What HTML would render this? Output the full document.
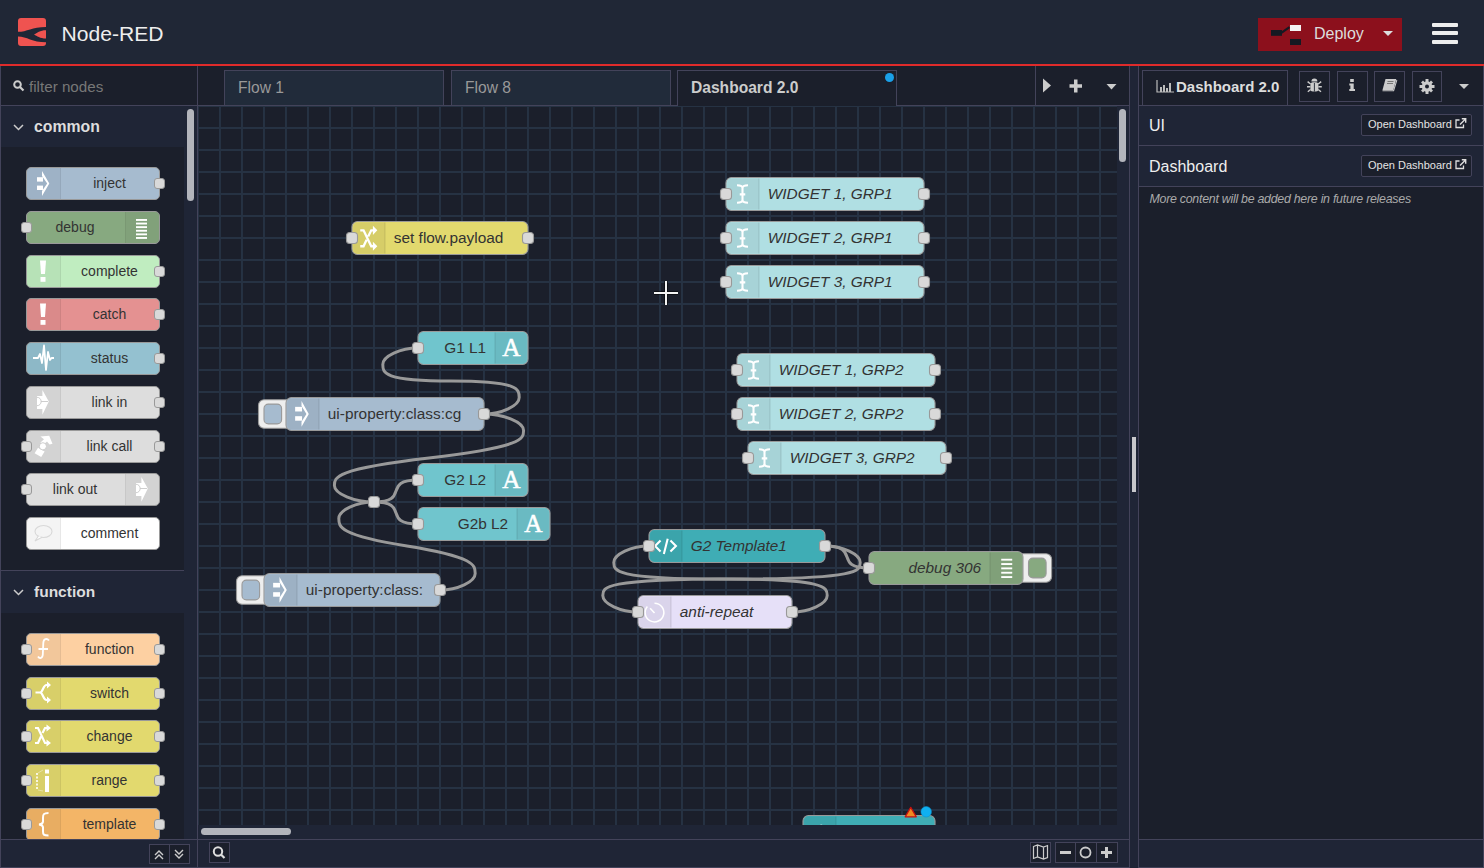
<!DOCTYPE html>
<html><head><meta charset="utf-8">
<style>
*{box-sizing:border-box;margin:0;padding:0}
html,body{width:1484px;height:868px;overflow:hidden;background:#202736;font-family:"Liberation Sans",sans-serif}
.abs{position:absolute}
.lbl{font-family:"Liberation Sans",sans-serif;font-size:14px;fill:#333}
.pnode{position:absolute;left:25px;width:134px;height:33px;border:1px solid #999;border-radius:5px}
.picon{position:absolute;top:0;bottom:0;width:34px;background:rgba(0,0,0,0.045);overflow:hidden}
.picon svg{position:absolute;left:0;top:0}
.plabel{position:absolute;top:0;bottom:0;line-height:31px;text-align:center;padding-right:2px;color:#333;font-size:14px;white-space:nowrap}
.pport{position:absolute;top:10px;width:11px;height:11px;background:#d9d9d9;border:1px solid #999;border-radius:3px}
</style></head><body>
<!-- header -->
<div class="abs" style="left:0;top:0;width:1484px;height:64px;background:#202736"></div>
<div class="abs" style="left:18px;top:18px;width:28px;height:28px;background:#ef5350;border-radius:3px;overflow:hidden">
<svg width="28" height="28" viewBox="0 0 28 28"><path d="M0 13.8 C9 13.8 14 8.9 28 8.9 V12.3 C22 12.3 19 15 16 16.6 C19 18.2 22 20.6 28 20.6 V24.2 C14 24.2 9 18.4 0 18.4Z" fill="#202736"/></svg></div>
<div class="abs" style="left:61.5px;top:21px;font-size:21.1px;color:#eee;line-height:25px">Node-RED</div>
<div class="abs" style="left:1258px;top:18px;width:144px;height:33px;background:#8c101c"></div>
<svg class="abs" style="left:1258px;top:18px" width="144" height="33">
<rect x="13" y="12" width="11" height="5.8" fill="#151922"/><path d="M23 15.2 L31.5 9.2" stroke="#151922" stroke-width="2.2"/><rect x="32" y="7" width="11" height="6" fill="#f4f4f4"/><rect x="32" y="21" width="11" height="6" fill="#151922"/>
<path d="M125 13h10l-5 5z" fill="#ddd"/></svg>
<div class="abs" style="left:1314px;top:25px;font-size:16px;color:#ddd;line-height:18px">Deploy</div>
<div class="abs" style="left:1432px;top:23px;width:26px;height:4px;background:#eee;border-radius:1px"></div>
<div class="abs" style="left:1432px;top:31px;width:26px;height:4px;background:#eee;border-radius:1px"></div>
<div class="abs" style="left:1432px;top:40px;width:26px;height:4px;background:#eee;border-radius:1px"></div>
<div class="abs" style="left:0;top:64px;width:1484px;height:2px;background:#e02b2b"></div><div class="abs" style="left:0;top:66px;width:1484px;height:1px;background:#2c3244"></div>

<!-- outer borders -->
<div class="abs" style="left:0;top:66px;width:1px;height:802px;background:#43435a"></div>
<div class="abs" style="left:1483px;top:66px;width:1px;height:802px;background:#43435a"></div>
<div class="abs" style="left:0;top:867px;width:1484px;height:1px;background:#43435a"></div>

<!-- palette -->
<div class="abs" style="left:1px;top:66px;width:196px;height:773px;background:#1f2536;overflow:hidden">
  <div class="abs" style="left:0;top:0;width:196px;height:39px;background:#1b1f2b"></div>
  <svg class="abs" style="left:12px;top:80px;top:14px" width="12" height="12"><circle cx="4.5" cy="4.5" r="3.3" stroke="#ccc" stroke-width="2" fill="none"/><path d="M7 7l3.5 3.5" stroke="#ccc" stroke-width="2.2"/></svg>
  <div class="abs" style="left:28px;top:12px;font-size:15.2px;color:#777;line-height:18px">filter nodes</div>
  <div class="abs" style="left:0;top:39px;width:196px;height:1px;background:#43435a"></div>
  <svg class="abs" style="left:12px;top:58px" width="11" height="7"><path d="M1 1l4.5 4.5L10 1" stroke="#ccc" stroke-width="1.5" fill="none"/></svg>
  <div class="abs" style="left:33px;top:51.5px;font-size:15.8px;font-weight:bold;color:#ddd;line-height:18px">common</div>
  <div class="abs" style="left:0;top:81px;width:183px;height:423px;background:#1b1f2b"><div class="pnode" style="top:20px;background:#a6bbcf"><div class="picon" style="left:0;border-right:1px solid rgba(0,0,0,0.05)"><svg width="34" height="33" style="position:absolute;left:-1px;top:-1px"><rect x="11" y="10.2" width="6" height="4.4" fill="#fff"/><rect x="11" y="18.6" width="6" height="4.4" fill="#fff"/><path d="M16 4 L23.3 16.5 L16 29 V24 L21.2 16.5 L16 9z" fill="#fff"/></svg></div><div class="plabel" style="left:35px;right:0">inject</div><div class="pport" style="right:-6px"></div></div><div class="pnode" style="top:64px;background:#87a980"><div class="plabel" style="left:0;right:34px">debug</div><div class="picon" style="right:0;border-left:1px solid rgba(0,0,0,0.05)"><svg width="34" height="33" style="position:absolute;left:-1px;top:-1px"><rect x="11" y="8.0" width="11" height="1.9" fill="#fff"/><rect x="11" y="11.6" width="11" height="1.9" fill="#fff"/><rect x="11" y="15.2" width="11" height="1.9" fill="#fff"/><rect x="11" y="18.8" width="11" height="1.9" fill="#fff"/><rect x="11" y="22.4" width="11" height="1.9" fill="#fff"/><rect x="11" y="26.0" width="11" height="1.9" fill="#fff"/></svg></div><div class="pport" style="left:-6px"></div></div><div class="pnode" style="top:108px;background:#c0edc0"><div class="picon" style="left:0;border-right:1px solid rgba(0,0,0,0.05)"><svg width="34" height="33" style="position:absolute;left:-1px;top:-1px"><path d="M14 5.5h6l-1 13.5h-4z" fill="#fff"/><rect x="14.5" y="22" width="5" height="4.8" fill="#fff"/></svg></div><div class="plabel" style="left:35px;right:0">complete</div><div class="pport" style="right:-6px"></div></div><div class="pnode" style="top:151px;background:#e49191"><div class="picon" style="left:0;border-right:1px solid rgba(0,0,0,0.05)"><svg width="34" height="33" style="position:absolute;left:-1px;top:-1px"><path d="M14 5.5h6l-1 13.5h-4z" fill="#fff"/><rect x="14.5" y="22" width="5" height="4.8" fill="#fff"/></svg></div><div class="plabel" style="left:35px;right:0">catch</div><div class="pport" style="right:-6px"></div></div><div class="pnode" style="top:195px;background:#94c1d0"><div class="picon" style="left:0;border-right:1px solid rgba(0,0,0,0.05)"><svg width="34" height="33" style="position:absolute;left:-1px;top:-1px"><path d="M7 16H12L14 12L16 21L18 3.5L20 28L22 10L24 18L25.5 16H28" stroke="#fff" stroke-width="1.8" fill="none" stroke-linejoin="round"/></svg></div><div class="plabel" style="left:35px;right:0">status</div><div class="pport" style="right:-6px"></div></div><div class="pnode" style="top:239px;background:#dddddd"><div class="picon" style="left:0;border-right:1px solid rgba(0,0,0,0.05)"><svg width="34" height="33" style="position:absolute;left:-1px;top:-1px"><path d="M16.4 3.9 L22.8 15.5 L16.4 28.8 V23 H11 V10 H16.4z" fill="#fff"/><path d="M11 11.3 A4.2 4.2 0 0 1 11 19.7 M14.8 15.5 H22" stroke="#c8c8c8" stroke-width="0.9" fill="none"/></svg></div><div class="plabel" style="left:35px;right:0">link in</div><div class="pport" style="right:-6px"></div></div><div class="pnode" style="top:283px;background:#dddddd"><div class="picon" style="left:0;border-right:1px solid rgba(0,0,0,0.05)"><svg width="34" height="33" style="position:absolute;left:-1px;top:-1px"><g fill="#fff"><path d="M8.6 23.2 L12 17.8 L18.6 21.6 L15.2 27z"/><path d="M14.4 6.5 L23.2 5.8 L26.5 13.8 L23.5 14.6 L21 11.5 L16.5 15.5 L14.5 12.5 L18 9.3z"/></g><circle cx="16.9" cy="16.3" r="3.6" fill="#fff" stroke="#c8c8c8" stroke-width="0.9"/></svg></div><div class="plabel" style="left:35px;right:0">link call</div><div class="pport" style="left:-6px"></div><div class="pport" style="right:-6px"></div></div><div class="pnode" style="top:326px;background:#dddddd"><div class="plabel" style="left:0;right:34px">link out</div><div class="picon" style="right:0;border-left:1px solid rgba(0,0,0,0.05)"><svg width="34" height="33" style="position:absolute;left:-1px;top:-1px"><path d="M16.4 3.9 L22.8 15.5 L16.4 28.8 V23 H11 V10 H16.4z" fill="#fff"/><path d="M11 11.3 A4.2 4.2 0 0 1 11 19.7 M14.8 15.5 H22" stroke="#c8c8c8" stroke-width="0.9" fill="none"/></svg></div><div class="pport" style="left:-6px"></div></div><div class="pnode" style="top:370px;background:#ffffff"><div class="picon" style="left:0;border-right:1px solid rgba(0,0,0,0.05)"><svg width="34" height="33" style="position:absolute;left:-1px;top:-1px"><ellipse cx="17.5" cy="14.5" rx="8.5" ry="6" stroke="#d8d8d8" stroke-width="1.1" fill="none"/><path d="M12.5 19 L9 24 L16 20.3" stroke="#d8d8d8" stroke-width="1.1" fill="#fff"/></svg></div><div class="plabel" style="left:35px;right:0">comment</div></div></div>
  <div class="abs" style="left:0;top:504px;width:183px;height:1px;background:#43435a"></div>
  <svg class="abs" style="left:12px;top:523px" width="11" height="7"><path d="M1 1l4.5 4.5L10 1" stroke="#ccc" stroke-width="1.5" fill="none"/></svg>
  <div class="abs" style="left:33px;top:517px;font-size:15.5px;font-weight:bold;color:#ddd;line-height:18px">function</div>
  <div class="abs" style="left:0;top:547px;width:183px;height:300px;background:#1b1f2b"><div class="pnode" style="top:20px;background:#fdd0a2"><div class="picon" style="left:0;border-right:1px solid rgba(0,0,0,0.05)"><svg width="34" height="33" style="position:absolute;left:-1px;top:-1px"><path d="M23 7.5 C21 5 17.5 5.5 17.3 10 L16.8 21.5 C16.6 25.5 13.5 26 12 23.5 M12.5 16 H22" stroke="#fff" stroke-width="1.8" fill="none"/></svg></div><div class="plabel" style="left:35px;right:0">function</div><div class="pport" style="left:-6px"></div><div class="pport" style="right:-6px"></div></div><div class="pnode" style="top:64px;background:#e2d96e"><div class="picon" style="left:0;border-right:1px solid rgba(0,0,0,0.05)"><svg width="34" height="33" style="position:absolute;left:-1px;top:-1px"><g stroke="#fff" stroke-width="2.2" fill="none"><path d="M9.5 15.5 H14 C17 15.5 17 8 20.5 8 H22 M14 15.5 C17 15.5 17 23 20.5 23 H22"/></g><path d="M21 4.5 L25 8 L21 11.5z M21 19.5 L25 23 L21 26.5z" fill="#fff"/></svg></div><div class="plabel" style="left:35px;right:0">switch</div><div class="pport" style="left:-6px"></div><div class="pport" style="right:-6px"></div></div><div class="pnode" style="top:107px;background:#e2d96e"><div class="picon" style="left:0;border-right:1px solid rgba(0,0,0,0.05)"><svg width="34" height="33" style="position:absolute;left:-1px;top:-1px"><g stroke="#fff" stroke-width="2.2" fill="none"><path d="M9 8 H12 L19 23 H21 M9 23 H12 L15 16.5 M16.5 13 L19 8 H21"/></g><path d="M20.5 4.5 L25 8 L20.5 11.5z M20.5 19.5 L25 23 L20.5 26.5z" fill="#fff"/></svg></div><div class="plabel" style="left:35px;right:0">change</div><div class="pport" style="left:-6px"></div><div class="pport" style="right:-6px"></div></div><div class="pnode" style="top:151px;background:#e2d96e"><div class="picon" style="left:0;border-right:1px solid rgba(0,0,0,0.05)"><svg width="34" height="33" style="position:absolute;left:-1px;top:-1px"><rect x="19" y="5.5" width="4" height="4" fill="#fff"/><rect x="19" y="12" width="4" height="16" fill="#fff"/><path d="M11 9v17" stroke="#fff" stroke-width="2" stroke-dasharray="2 1.5" opacity="0.8"/><path d="M12 9 L17 6 M12 26 L17 27" stroke="#fff" stroke-width="0.8" opacity="0.5"/></svg></div><div class="plabel" style="left:35px;right:0">range</div><div class="pport" style="left:-6px"></div><div class="pport" style="right:-6px"></div></div><div class="pnode" style="top:195px;background:#f3b567"><div class="picon" style="left:0;border-right:1px solid rgba(0,0,0,0.05)"><svg width="34" height="33" style="position:absolute;left:-1px;top:-1px"><path d="M22.5 5 C17.5 5 17 6.5 17 10 V13.5 C17 15.5 15.5 16.2 13 16.5 C15.5 16.8 17 17.5 17 19.5 V23.5 C17 26.5 17.5 27.5 22.5 27.5" stroke="#fff" stroke-width="2" fill="none"/></svg></div><div class="plabel" style="left:35px;right:0">template</div><div class="pport" style="left:-6px"></div><div class="pport" style="right:-6px"></div></div></div>
  <div class="abs" style="left:186px;top:43px;width:7px;height:92px;background:#b3b5bc;border-radius:4px"></div>
</div>
<div class="abs" style="left:197px;top:66px;width:1px;height:802px;background:#43435a"></div>
<div class="abs" style="left:1px;top:839px;width:196px;height:1px;background:#43435a"></div>
<div class="abs" style="left:1px;top:840px;width:196px;height:27px;background:#1f2536"></div>
<div class="abs" style="left:149px;top:844px;width:41px;height:20px;border:1px solid #43435a;background:#1b1f2b"></div>
<div class="abs" style="left:169px;top:844px;width:1px;height:20px;background:#43435a"></div>
<svg class="abs" style="left:149px;top:844px" width="41" height="20"><path d="M6 11l4-4 4 4M6 15l4-4 4 4M26 6l4 4 4-4M26 10l4 4 4-4" stroke="#ccc" stroke-width="1.4" fill="none"/></svg>

<!-- canvas -->
<div class="abs" style="left:198px;top:66px;width:931px;height:39px;background:#1b1f2b">
  <div class="abs" style="left:26px;top:4px;width:220px;height:35px;background:#212b3a;border:1px solid #43435a;border-bottom:none"></div>
  <div class="abs" style="left:40px;top:13px;font-size:15.6px;color:#999;line-height:17px">Flow 1</div>
  <div class="abs" style="left:253px;top:4px;width:220px;height:35px;background:#212b3a;border:1px solid #43435a;border-bottom:none"></div>
  <div class="abs" style="left:267px;top:13px;font-size:15.6px;color:#999;line-height:17px">Flow 8</div>
  <div class="abs" style="left:479px;top:4px;width:220px;height:36px;background:#1b1f2b;border:1px solid #43435a;border-bottom:none;z-index:2"></div>
  <div class="abs" style="left:493px;top:13px;font-size:15.6px;font-weight:bold;color:#ccc;line-height:17px;z-index:3">Dashboard 2.0</div>
  <div class="abs" style="left:687px;top:7px;width:9px;height:9px;border-radius:50%;background:#1aa0e8;z-index:3"></div>
  <div class="abs" style="left:837px;top:0;width:1px;height:39px;background:#43435a"></div>
  <svg class="abs" style="left:838px;top:0" width="93" height="39"><path d="M7 12.5v14l8-7z" fill="#ccc"/><path d="M33.5 20h12.5M39.75 13.5v13" stroke="#ccc" stroke-width="3.5"/><path d="M70.5 18h10l-5 5.5z" fill="#ccc"/></svg>
</div>
<div class="abs" style="left:198px;top:105px;width:931px;height:1px;background:#43435a"></div>
<div class="abs" style="left:1129px;top:66px;width:1px;height:802px;background:#43435a"></div>
<div class="abs" style="left:198px;top:106px;width:931px;height:733px;background:#1f2536;overflow:hidden">
  <div class="abs" style="left:0;top:0;width:919px;height:719px;background:#1b1f2b;overflow:hidden"><svg width="919" height="719" style="position:absolute;left:0;top:0">
<g transform="scale(1.1)">
<g stroke="#263243" stroke-width="1.8181" fill="none"><path d="M0 0V700" /><path d="M20 0V700" /><path d="M40 0V700" /><path d="M60 0V700" /><path d="M80 0V700" /><path d="M100 0V700" /><path d="M120 0V700" /><path d="M140 0V700" /><path d="M160 0V700" /><path d="M180 0V700" /><path d="M200 0V700" /><path d="M220 0V700" /><path d="M240 0V700" /><path d="M260 0V700" /><path d="M280 0V700" /><path d="M300 0V700" /><path d="M320 0V700" /><path d="M340 0V700" /><path d="M360 0V700" /><path d="M380 0V700" /><path d="M400 0V700" /><path d="M420 0V700" /><path d="M440 0V700" /><path d="M460 0V700" /><path d="M480 0V700" /><path d="M500 0V700" /><path d="M520 0V700" /><path d="M540 0V700" /><path d="M560 0V700" /><path d="M580 0V700" /><path d="M600 0V700" /><path d="M620 0V700" /><path d="M640 0V700" /><path d="M660 0V700" /><path d="M680 0V700" /><path d="M700 0V700" /><path d="M720 0V700" /><path d="M740 0V700" /><path d="M760 0V700" /><path d="M780 0V700" /><path d="M800 0V700" /><path d="M820 0V700" /><path d="M840 0V700" /><path d="M860 0V700" /><path d="M0 0H900" /><path d="M0 20H900" /><path d="M0 40H900" /><path d="M0 60H900" /><path d="M0 80H900" /><path d="M0 100H900" /><path d="M0 120H900" /><path d="M0 140H900" /><path d="M0 160H900" /><path d="M0 180H900" /><path d="M0 200H900" /><path d="M0 220H900" /><path d="M0 240H900" /><path d="M0 260H900" /><path d="M0 280H900" /><path d="M0 300H900" /><path d="M0 320H900" /><path d="M0 340H900" /><path d="M0 360H900" /><path d="M0 380H900" /><path d="M0 400H900" /><path d="M0 420H900" /><path d="M0 440H900" /><path d="M0 460H900" /><path d="M0 480H900" /><path d="M0 500H900" /><path d="M0 520H900" /><path d="M0 540H900" /><path d="M0 560H900" /><path d="M0 580H900" /><path d="M0 600H900" /><path d="M0 620H900" /><path d="M0 640H900" /><path d="M0 660H900" /></g>
<g stroke="#999" stroke-width="2.7" fill="none"><path d="M 260 280 C 276 280 292 272.5 292 265 S 292 250 230 250 S 168 242.5 168 235 S 184 220 200 220"/><path d="M 260 280 C 278 280 296 287.5 296 295 S 296 310 210 320 S 124 337.5 124 345 S 142 360 160 360"/><path d="M 220 440 C 236 440 252 432.5 252 425 S 252 410 190 400 S 128 382.5 128 375 S 144 360 160 360"/><path d="M 160 360 C 193.54 360 166.46 340 200 340"/><path d="M 160 360 C 193.54 360 166.46 380 200 380"/><path d="M 570 400 C 603.54 400 576.46 420 610 420"/><path d="M 570 400 C 586 400 602 407.5 602 415 S 602 430 485 430 S 368 437.5 368 445 S 384 460 400 460"/><path d="M 540 460 C 556 460 572 452.5 572 445 S 572 430 475 430 S 378 422.5 378 415 S 394 400 410 400"/></g>
<rect x="155" y="355" width="10" height="10" rx="3" fill="#d9d9d9" stroke="#999"/>
<g transform="translate(140,105)"><rect x="0" y="0" width="160" height="30" rx="5" fill="#e2d96e" stroke="#999"/><path d="M30 1h-25a4 4 0 0 0-4 4v20a4 4 0 0 0 4 4h25z" fill="#000" fill-opacity="0.05"/><path d="M30 1v28" stroke="#000" stroke-opacity="0.1"/><g stroke="#fff" stroke-width="2.1" fill="none"><path d="M7.5 8 H10.5 L17.5 22.5 H19.5 M7.5 22.5 H10.5 L13.3 16.6 M14.7 13.7 L17.5 8 H19.5"/></g><path d="M19 3.8 L23 8 L19 12.2z M19 18.3 L23 22.5 L19 26.7z" fill="#fff"/><text x="38" y="15" dy=".35em" style="" class="lbl">set flow.payload</text><rect x="-5" y="10" width="10" height="10" rx="3" fill="#d9d9d9" stroke="#999"/><rect x="155" y="10" width="10" height="10" rx="3" fill="#d9d9d9" stroke="#999"/></g><g transform="translate(200,205)"><rect x="0" y="0" width="100" height="30" rx="5" fill="#70c5cd" stroke="#999"/><path d="M70 1h25a4 4 0 0 1 4 4v20a4 4 0 0 1-4 4h-25z" fill="#000" fill-opacity="0.05"/><path d="M70 1v28" stroke="#000" stroke-opacity="0.1"/><g transform="translate(70,0)"><text x="15" y="22.3" font-family="Liberation Serif" font-size="23" fill="#fff" stroke="#fff" stroke-width="0.45" text-anchor="middle">A</text></g><text x="62" y="15" dy=".35em" text-anchor="end" style="" class="lbl">G1 L1</text><rect x="-5" y="10" width="10" height="10" rx="3" fill="#d9d9d9" stroke="#999"/></g><g transform="translate(80,265)"><rect x="-25" y="2" width="32" height="26" rx="5" fill="#eee" stroke="#999"/><rect x="-20" y="6" width="16" height="18" rx="4" fill="#a6bbcf" stroke="#999"/><rect x="0" y="0" width="180" height="30" rx="5" fill="#a6bbcf" stroke="#999"/><path d="M30 1h-25a4 4 0 0 0-4 4v20a4 4 0 0 0 4 4h25z" fill="#000" fill-opacity="0.05"/><path d="M30 1v28" stroke="#000" stroke-opacity="0.1"/><rect x="8.3" y="8.5" width="6.3" height="4.2" fill="#fff"/><rect x="8.3" y="17" width="6.3" height="4.1" fill="#fff"/><path d="M14.1 3.2 L20.7 14.9 L14.1 26.5 V22 L18.6 14.9 L14.1 7.7z" fill="#fff"/><text x="38" y="15" dy=".35em" style="" class="lbl">ui-property:class:cg</text><rect x="175" y="10" width="10" height="10" rx="3" fill="#d9d9d9" stroke="#999"/></g><g transform="translate(200,325)"><rect x="0" y="0" width="100" height="30" rx="5" fill="#70c5cd" stroke="#999"/><path d="M70 1h25a4 4 0 0 1 4 4v20a4 4 0 0 1-4 4h-25z" fill="#000" fill-opacity="0.05"/><path d="M70 1v28" stroke="#000" stroke-opacity="0.1"/><g transform="translate(70,0)"><text x="15" y="22.3" font-family="Liberation Serif" font-size="23" fill="#fff" stroke="#fff" stroke-width="0.45" text-anchor="middle">A</text></g><text x="62" y="15" dy=".35em" text-anchor="end" style="" class="lbl">G2 L2</text><rect x="-5" y="10" width="10" height="10" rx="3" fill="#d9d9d9" stroke="#999"/></g><g transform="translate(200,365)"><rect x="0" y="0" width="120" height="30" rx="5" fill="#70c5cd" stroke="#999"/><path d="M90 1h25a4 4 0 0 1 4 4v20a4 4 0 0 1-4 4h-25z" fill="#000" fill-opacity="0.05"/><path d="M90 1v28" stroke="#000" stroke-opacity="0.1"/><g transform="translate(90,0)"><text x="15" y="22.3" font-family="Liberation Serif" font-size="23" fill="#fff" stroke="#fff" stroke-width="0.45" text-anchor="middle">A</text></g><text x="82" y="15" dy=".35em" text-anchor="end" style="" class="lbl">G2b L2</text><rect x="-5" y="10" width="10" height="10" rx="3" fill="#d9d9d9" stroke="#999"/></g><g transform="translate(60,425)"><rect x="-25" y="2" width="32" height="26" rx="5" fill="#eee" stroke="#999"/><rect x="-20" y="6" width="16" height="18" rx="4" fill="#a6bbcf" stroke="#999"/><rect x="0" y="0" width="160" height="30" rx="5" fill="#a6bbcf" stroke="#999"/><path d="M30 1h-25a4 4 0 0 0-4 4v20a4 4 0 0 0 4 4h25z" fill="#000" fill-opacity="0.05"/><path d="M30 1v28" stroke="#000" stroke-opacity="0.1"/><rect x="8.3" y="8.5" width="6.3" height="4.2" fill="#fff"/><rect x="8.3" y="17" width="6.3" height="4.1" fill="#fff"/><path d="M14.1 3.2 L20.7 14.9 L14.1 26.5 V22 L18.6 14.9 L14.1 7.7z" fill="#fff"/><text x="38" y="15" dy=".35em" style="" class="lbl">ui-property:class:</text><rect x="155" y="10" width="10" height="10" rx="3" fill="#d9d9d9" stroke="#999"/></g><g transform="translate(480,65)"><rect x="0" y="0" width="180" height="30" rx="5" fill="#b0dfe3" stroke="#999"/><path d="M30 1h-25a4 4 0 0 0-4 4v20a4 4 0 0 0 4 4h25z" fill="#000" fill-opacity="0.05"/><path d="M30 1v28" stroke="#000" stroke-opacity="0.1"/><g fill="none" stroke="#fff" stroke-width="1.9"><path d="M10 7c3 0 5 .5 5 2.5v11c0 2 2 2.5 5 2.5M20 7c-3 0-5 .5-5 2.5v11c0 2-2 2.5-5 2.5M12.5 15.3h5"/></g><text x="38" y="15" dy=".35em" style="font-style:italic;" class="lbl">WIDGET 1, GRP1</text><rect x="-5" y="10" width="10" height="10" rx="3" fill="#d9d9d9" stroke="#999"/><rect x="175" y="10" width="10" height="10" rx="3" fill="#d9d9d9" stroke="#999"/></g><g transform="translate(480,105)"><rect x="0" y="0" width="180" height="30" rx="5" fill="#b0dfe3" stroke="#999"/><path d="M30 1h-25a4 4 0 0 0-4 4v20a4 4 0 0 0 4 4h25z" fill="#000" fill-opacity="0.05"/><path d="M30 1v28" stroke="#000" stroke-opacity="0.1"/><g fill="none" stroke="#fff" stroke-width="1.9"><path d="M10 7c3 0 5 .5 5 2.5v11c0 2 2 2.5 5 2.5M20 7c-3 0-5 .5-5 2.5v11c0 2-2 2.5-5 2.5M12.5 15.3h5"/></g><text x="38" y="15" dy=".35em" style="font-style:italic;" class="lbl">WIDGET 2, GRP1</text><rect x="-5" y="10" width="10" height="10" rx="3" fill="#d9d9d9" stroke="#999"/><rect x="175" y="10" width="10" height="10" rx="3" fill="#d9d9d9" stroke="#999"/></g><g transform="translate(480,145)"><rect x="0" y="0" width="180" height="30" rx="5" fill="#b0dfe3" stroke="#999"/><path d="M30 1h-25a4 4 0 0 0-4 4v20a4 4 0 0 0 4 4h25z" fill="#000" fill-opacity="0.05"/><path d="M30 1v28" stroke="#000" stroke-opacity="0.1"/><g fill="none" stroke="#fff" stroke-width="1.9"><path d="M10 7c3 0 5 .5 5 2.5v11c0 2 2 2.5 5 2.5M20 7c-3 0-5 .5-5 2.5v11c0 2-2 2.5-5 2.5M12.5 15.3h5"/></g><text x="38" y="15" dy=".35em" style="font-style:italic;" class="lbl">WIDGET 3, GRP1</text><rect x="-5" y="10" width="10" height="10" rx="3" fill="#d9d9d9" stroke="#999"/><rect x="175" y="10" width="10" height="10" rx="3" fill="#d9d9d9" stroke="#999"/></g><g transform="translate(490,225)"><rect x="0" y="0" width="180" height="30" rx="5" fill="#b0dfe3" stroke="#999"/><path d="M30 1h-25a4 4 0 0 0-4 4v20a4 4 0 0 0 4 4h25z" fill="#000" fill-opacity="0.05"/><path d="M30 1v28" stroke="#000" stroke-opacity="0.1"/><g fill="none" stroke="#fff" stroke-width="1.9"><path d="M10 7c3 0 5 .5 5 2.5v11c0 2 2 2.5 5 2.5M20 7c-3 0-5 .5-5 2.5v11c0 2-2 2.5-5 2.5M12.5 15.3h5"/></g><text x="38" y="15" dy=".35em" style="font-style:italic;" class="lbl">WIDGET 1, GRP2</text><rect x="-5" y="10" width="10" height="10" rx="3" fill="#d9d9d9" stroke="#999"/><rect x="175" y="10" width="10" height="10" rx="3" fill="#d9d9d9" stroke="#999"/></g><g transform="translate(490,265)"><rect x="0" y="0" width="180" height="30" rx="5" fill="#b0dfe3" stroke="#999"/><path d="M30 1h-25a4 4 0 0 0-4 4v20a4 4 0 0 0 4 4h25z" fill="#000" fill-opacity="0.05"/><path d="M30 1v28" stroke="#000" stroke-opacity="0.1"/><g fill="none" stroke="#fff" stroke-width="1.9"><path d="M10 7c3 0 5 .5 5 2.5v11c0 2 2 2.5 5 2.5M20 7c-3 0-5 .5-5 2.5v11c0 2-2 2.5-5 2.5M12.5 15.3h5"/></g><text x="38" y="15" dy=".35em" style="font-style:italic;" class="lbl">WIDGET 2, GRP2</text><rect x="-5" y="10" width="10" height="10" rx="3" fill="#d9d9d9" stroke="#999"/><rect x="175" y="10" width="10" height="10" rx="3" fill="#d9d9d9" stroke="#999"/></g><g transform="translate(500,305)"><rect x="0" y="0" width="180" height="30" rx="5" fill="#b0dfe3" stroke="#999"/><path d="M30 1h-25a4 4 0 0 0-4 4v20a4 4 0 0 0 4 4h25z" fill="#000" fill-opacity="0.05"/><path d="M30 1v28" stroke="#000" stroke-opacity="0.1"/><g fill="none" stroke="#fff" stroke-width="1.9"><path d="M10 7c3 0 5 .5 5 2.5v11c0 2 2 2.5 5 2.5M20 7c-3 0-5 .5-5 2.5v11c0 2-2 2.5-5 2.5M12.5 15.3h5"/></g><text x="38" y="15" dy=".35em" style="font-style:italic;" class="lbl">WIDGET 3, GRP2</text><rect x="-5" y="10" width="10" height="10" rx="3" fill="#d9d9d9" stroke="#999"/><rect x="175" y="10" width="10" height="10" rx="3" fill="#d9d9d9" stroke="#999"/></g><g transform="translate(410,385)"><rect x="0" y="0" width="160" height="30" rx="5" fill="#3fadb5" stroke="#999"/><path d="M30 1h-25a4 4 0 0 0-4 4v20a4 4 0 0 0 4 4h25z" fill="#000" fill-opacity="0.05"/><path d="M30 1v28" stroke="#000" stroke-opacity="0.1"/><g fill="none" stroke="#fff" stroke-width="1.9"><path d="M10.5 10l-5 5 5 5M19.5 10l5 5-5 5M17 8.3l-3.5 14"/></g><text x="38" y="15" dy=".35em" style="font-style:italic;" class="lbl">G2 Template1</text><rect x="-5" y="10" width="10" height="10" rx="3" fill="#d9d9d9" stroke="#999"/><rect x="155" y="10" width="10" height="10" rx="3" fill="#d9d9d9" stroke="#999"/></g><g transform="translate(610,405)"><rect x="134" y="2" width="32" height="26" rx="5" fill="#eee" stroke="#999"/><rect x="145" y="6" width="16" height="18" rx="4" fill="#87a980" stroke="#999"/><rect x="0" y="0" width="140" height="30" rx="5" fill="#87a980" stroke="#999"/><path d="M110 1h25a4 4 0 0 1 4 4v20a4 4 0 0 1-4 4h-25z" fill="#000" fill-opacity="0.05"/><path d="M110 1v28" stroke="#000" stroke-opacity="0.1"/><g transform="translate(110,0)"><rect x="10.2" y="6.60" width="10" height="1.7" fill="#fff"/><rect x="10.2" y="10.55" width="10" height="1.7" fill="#fff"/><rect x="10.2" y="14.50" width="10" height="1.7" fill="#fff"/><rect x="10.2" y="18.45" width="10" height="1.7" fill="#fff"/><rect x="10.2" y="22.40" width="10" height="1.7" fill="#fff"/></g><text x="102" y="15" dy=".35em" text-anchor="end" style="font-style:italic;" class="lbl">debug 306</text><rect x="-5" y="10" width="10" height="10" rx="3" fill="#d9d9d9" stroke="#999"/></g><g transform="translate(400,445)"><rect x="0" y="0" width="140" height="30" rx="5" fill="#e6e0f8" stroke="#999"/><path d="M30 1h-25a4 4 0 0 0-4 4v20a4 4 0 0 0 4 4h25z" fill="#000" fill-opacity="0.05"/><path d="M30 1v28" stroke="#000" stroke-opacity="0.1"/><g fill="none" stroke="#fff" stroke-width="1.4"><path d="M15 7 A8.5 8.5 0 1 1 8.5 10"/><path d="M15 16 L11 11.5"/></g><text x="38" y="15" dy=".35em" style="font-style:italic;" class="lbl">anti-repeat</text><rect x="-5" y="10" width="10" height="10" rx="3" fill="#d9d9d9" stroke="#999"/><rect x="135" y="10" width="10" height="10" rx="3" fill="#d9d9d9" stroke="#999"/></g><g transform="translate(550,645)"><rect x="0" y="0" width="120" height="30" rx="5" fill="#3fadb5" stroke="#999"/><path d="M30 1h-25a4 4 0 0 0-4 4v20a4 4 0 0 0 4 4h25z" fill="#000" fill-opacity="0.05"/><path d="M30 1v28" stroke="#000" stroke-opacity="0.1"/><g fill="none" stroke="#fff" stroke-width="1.9"><path d="M10.5 10l-5 5 5 5M19.5 10l5 5-5 5M17 8.3l-3.5 14"/></g><rect x="-5" y="10" width="10" height="10" rx="3" fill="#d9d9d9" stroke="#999"/><rect x="115" y="10" width="10" height="10" rx="3" fill="#d9d9d9" stroke="#999"/><path d="M92.9 1.2 L97.95 -7.4 L103 1.2z" fill="#f08a20" stroke="#c81010" stroke-width="1.1" stroke-linejoin="round"/><circle cx="112" cy="-3.4" r="4.8" fill="#10b0f0" stroke="#0a90d0" stroke-width="0.5"/></g>
</g>
<g stroke="#000" stroke-width="4" stroke-opacity="0.5"><path d="M456 187h24M468 175v24"/></g>
<g stroke="#f4f4f4" stroke-width="2"><path d="M456 187h24M468 175v24"/></g>
</svg></div>
  <div class="abs" style="left:921px;top:3px;width:7px;height:53px;background:#b3b5bc;border-radius:4px"></div>
  <div class="abs" style="left:3px;top:722px;width:90px;height:7px;background:#b3b5bc;border-radius:4px"></div>
</div>
<div class="abs" style="left:198px;top:839px;width:931px;height:1px;background:#43435a"></div>
<div class="abs" style="left:198px;top:840px;width:931px;height:27px;background:#1f2536"></div>
<div class="abs" style="left:209px;top:842px;width:21px;height:21px;border:1px solid #43435a;background:#1b1f2b"></div>
<svg class="abs" style="left:209px;top:842px" width="21" height="21"><circle cx="9" cy="9.5" r="4.2" stroke="#ddd" stroke-width="2" fill="none"/><path d="M12 12.5l3.5 3.5" stroke="#ddd" stroke-width="2.2"/></svg>
<div class="abs" style="left:1030px;top:842px;width:21px;height:21px;border:1px solid #43435a;background:#1b1f2b"></div>
<svg class="abs" style="left:1030px;top:842px" width="21" height="21"><path d="M3.5 4.5l4-1.5 6 2 4-1.5v12l-4 1.5-6-2-4 1.5z M7.5 3v12 M13.5 5v12" stroke="#ccc" stroke-width="1.2" fill="none"/></svg>
<div class="abs" style="left:1055px;top:842px;width:63px;height:21px;border:1px solid #43435a;background:#1b1f2b"></div>
<div class="abs" style="left:1075px;top:842px;width:1px;height:21px;background:#43435a"></div>
<div class="abs" style="left:1096px;top:842px;width:1px;height:21px;background:#43435a"></div>
<svg class="abs" style="left:1055px;top:842px" width="63" height="21"><path d="M5 10.5h11" stroke="#ccc" stroke-width="3"/><circle cx="30.5" cy="10.5" r="5" stroke="#ccc" stroke-width="1.8" fill="none"/><path d="M46 10.5h11M51.5 5v11" stroke="#ccc" stroke-width="3"/></svg>

<!-- separator -->
<div class="abs" style="left:1130px;top:66px;width:8px;height:802px;background:#1f2536"></div>
<div class="abs" style="left:1132px;top:437px;width:4px;height:55px;background:#c8c8cc"></div>
<div class="abs" style="left:1138px;top:66px;width:1px;height:802px;background:#43435a"></div>

<!-- sidebar -->
<div class="abs" style="left:1139px;top:66px;width:344px;height:773px;background:#1b1f2b;overflow:hidden">
  <div class="abs" style="left:3px;top:4px;width:146px;height:35px;border:1px solid #43435a;border-bottom:none"></div>
  <svg class="abs" style="left:17px;top:14px" width="18" height="13"><path d="M1 0v12h17" stroke="#bbb" stroke-width="1.2" fill="none"/><path d="M4 7h2v5h-2zM7 5h2v7h-2zM10 8h2v4h-2zM13 3h2v9h-2z" fill="#bbb"/></svg>
  <div class="abs" style="left:37px;top:12px;font-size:15px;font-weight:bold;color:#ddd;line-height:17px">Dashboard 2.0</div>
  <div class="abs" style="left:160px;top:5px;width:31px;height:31px;border:1px solid #43435a"></div>
  <div class="abs" style="left:198px;top:5px;width:31px;height:31px;border:1px solid #43435a"></div>
  <div class="abs" style="left:235px;top:5px;width:31px;height:31px;border:1px solid #43435a"></div>
  <div class="abs" style="left:273px;top:5px;width:30px;height:31px;border:1px solid #43435a"></div>
  <svg class="abs" style="left:160px;top:5px" width="150" height="31">
   <g fill="#ccc"><path d="M12.4 10.5 A3 3 0 0 1 18.4 10.5z"/><rect x="11.4" y="11.3" width="8" height="9.3" rx="2.5"/><path d="M11.6 13 L8.6 10.6 M11.4 15.8 H8 M11.6 18.5 L8.8 20.8 M19.2 13 L22.2 10.6 M19.4 15.8 H22.8 M19.2 18.5 L22 20.8" stroke="#ccc" stroke-width="1.4"/><path d="M15.4 12v8.5" stroke="#1b1f2b" stroke-width="0.9"/></g>
   <g fill="#ccc"><rect x="51.2" y="8" width="3.6" height="3"/><path d="M50.3 12.5h4.4v5.6h1.3v1.9h-5.7v-1.9h1.1v-3.7h-1.1z"/></g>
   <g><path d="M86.5 8 H97.3 L94.3 19 H83.5z" fill="#ccc"/><path d="M83.5 19.8 H94.6 L97.8 9.2" stroke="#ccc" stroke-width="1.1" fill="none"/><path d="M88.5 10.5 h6 M88 12.5 h6" stroke="#777" stroke-width="1"/></g>
   <g transform="translate(128,15.5)" fill="#ccc"><circle r="5.2"/><path d="M-1.5 -7.5h3v3h-3zM-1.5 4.5h3v3h-3zM-7.5 -1.5h3v3h-3zM4.5 -1.5h3v3h-3z"/><path d="M-6 -4 l2 -2 l2 2 l-2 2z M6 -4 l-2 -2 l-2 2 l2 2z M-6 4 l2 2 l2 -2 l-2 -2z M6 4 l-2 2 l-2 -2 l2 -2z"/><circle r="2" fill="#1b1f2b"/></g>
  </svg>
  <svg class="abs" style="left:320px;top:17px" width="12" height="8"><path d="M0 1h10l-5 5z" fill="#ccc"/></svg>
  <div class="abs" style="left:0;top:39px;width:344px;height:1px;background:#43435a"></div>
  <div class="abs" style="left:0;top:40px;width:344px;height:40px;background:#1f2536"></div>
  <div class="abs" style="left:0;top:79px;width:344px;height:1px;background:#43435a"></div>
  <div class="abs" style="left:0;top:80px;width:344px;height:40px;background:#1f2536"></div>
  <div class="abs" style="left:0;top:120px;width:344px;height:1px;background:#43435a"></div>
  <div class="abs" style="left:10px;top:51px;font-size:16px;color:#eee;line-height:18px">UI</div>
  <div class="abs" style="left:10px;top:92px;font-size:16px;color:#eee;line-height:18px">Dashboard</div>
  <div class="abs" style="left:222px;top:48px;width:111px;height:22px;border:1px solid #43435a;background:#1b1f2b;font-size:11px;color:#e4e4e4;line-height:18px;padding-left:6px;border-radius:2px">Open Dashboard<svg width="12" height="11" style="position:absolute;left:93px;top:3px"><path d="M8.5 6.5v3h-7.5v-7.5h3.5" stroke="#ddd" stroke-width="1.3" fill="none"/><path d="M5 6.5L10.5 1M6.8 0.8h3.9v3.9" stroke="#ddd" stroke-width="1.4" fill="none"/></svg></div>
  <div class="abs" style="left:222px;top:89px;width:111px;height:22px;border:1px solid #43435a;background:#1b1f2b;font-size:11px;color:#e4e4e4;line-height:18px;padding-left:6px;border-radius:2px">Open Dashboard<svg width="12" height="11" style="position:absolute;left:93px;top:3px"><path d="M8.5 6.5v3h-7.5v-7.5h3.5" stroke="#ddd" stroke-width="1.3" fill="none"/><path d="M5 6.5L10.5 1M6.8 0.8h3.9v3.9" stroke="#ddd" stroke-width="1.4" fill="none"/></svg></div>
  <div class="abs" style="left:10.5px;top:126px;font-size:12.4px;letter-spacing:-0.27px;font-style:italic;color:#aaa;line-height:14px">More content will be added here in future releases</div>
</div>
<div class="abs" style="left:1139px;top:839px;width:344px;height:1px;background:#43435a"></div>
<div class="abs" style="left:1139px;top:840px;width:344px;height:27px;background:#1f2536"></div>
</body></html>
